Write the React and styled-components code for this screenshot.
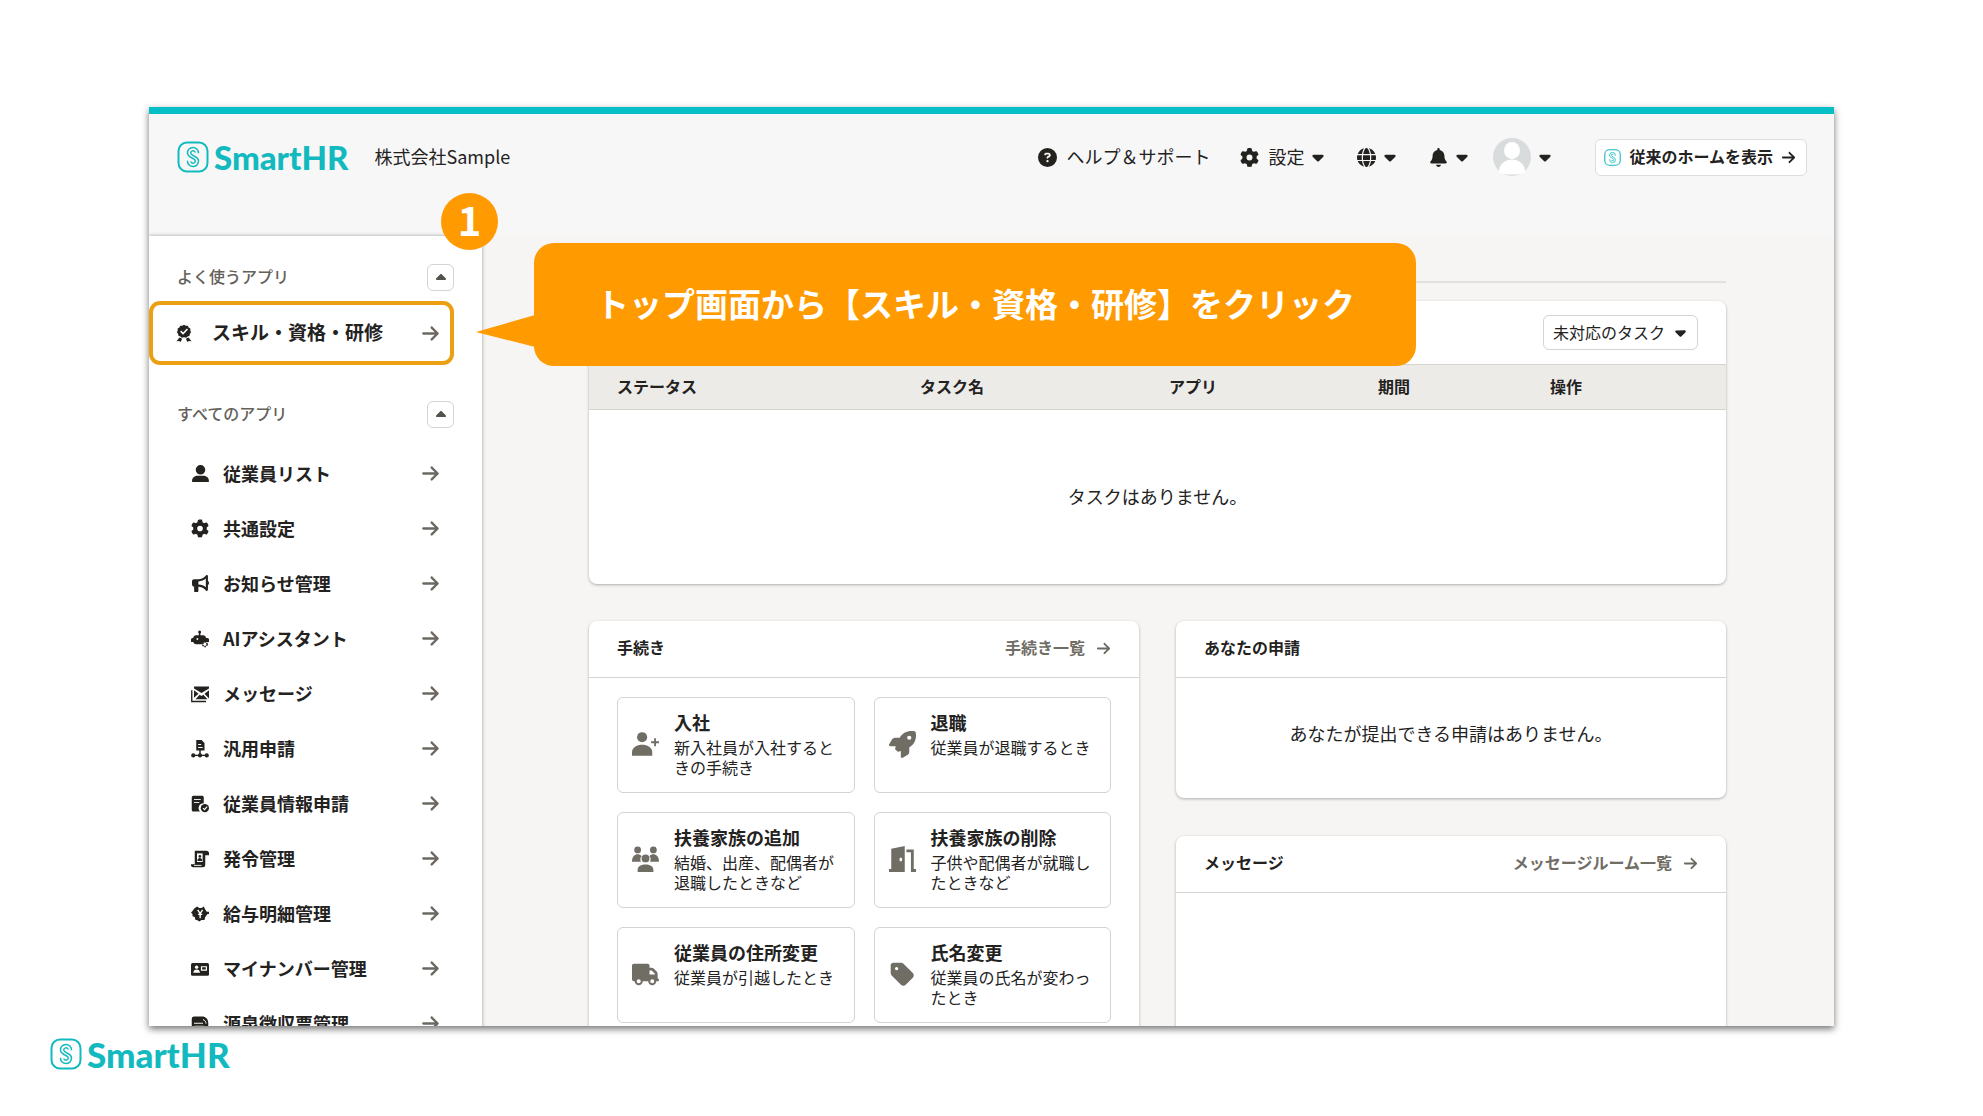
import React from 'react';
import styled, { createGlobalStyle } from 'styled-components';
import {
  FaArrowRight,
  FaBell,
  FaBullhorn,
  FaCaretDown,
  FaCaretUp,
  FaCircleQuestion,
  FaGear,
  FaGlobe,
  FaRocket,
  FaTag,
  FaTruck,
  FaUserLarge,
} from 'react-icons/fa6';

const GlobalStyle = createGlobalStyle`
  * {
    box-sizing: border-box;
  }

  body {
    margin: 0;
    background: #fff;
    color: #23221e;
    font-family: "Noto Sans CJK JP", "Noto Sans", sans-serif;
    font-size: 16px;
    line-height: 20px;
  }

  button,
  select {
    font: inherit;
    color: inherit;
  }

  a {
    color: inherit;
    text-decoration: none;
  }
`;

const Slide = styled.div`
  display: flex;
  flex-direction: column;
  height: 100vh;
  padding: 107px 149px 0;
`;

const Stage = styled.div`
  position: relative;
  flex: 1;
  min-height: 0;
`;

const Screen = styled.div`
  height: 100%;
  overflow: hidden;
  border-top: 7px solid #06bec6;
  background: #f6f5f4;
  box-shadow: 0 3px 7px rgba(0, 0, 0, 0.55);
`;

const SlideFooter = styled.footer`
  display: flex;
  align-items: flex-start;
  height: 90px;
  margin-left: -99px;
  padding-top: 12px;
`;

const Brand = styled.a`
  display: flex;
  align-items: center;
  gap: 5px;
  color: #12b9bf;
  font-family: Lato, "Noto Sans", sans-serif;
  font-size: ${({ $size }) => $size}px;
  font-weight: 900;
  line-height: 32px;
`;

const Header = styled.header`
  display: flex;
  align-items: center;
  gap: 26px;
  padding: 24px 27px 60px 28px;
  background: #f8f7f8;
  font-size: 18px;
`;

const Nav = styled.nav`
  display: flex;
  align-items: center;
  gap: 30px;
  margin-left: auto;
`;

const NavButton = styled.button`
  display: flex;
  align-items: center;
  gap: 5px;
  padding: 0;
  border: 0;
  background: none;
`;

const NavLabel = styled.span`
  margin-left: 4px;
  padding-bottom: 2px;
`;

const AccountButton = styled(NavButton)`
  margin-left: -8px;
`;

const Avatar = styled.svg`
  width: 38px;
  height: 38px;
`;

const HomeLink = styled.a`
  display: flex;
  align-items: center;
  gap: 8px;
  height: 37px;
  margin-left: 11px;
  padding: 0 10px 0 8px;
  border: 1px solid #dfdddb;
  border-radius: 6px;
  background: #fff;
  font-size: 16px;
  font-weight: 700;
`;

const Company = styled.span`
  padding-bottom: 2px;
`;

const Layout = styled.div`
  display: flex;
`;

const Sidebar = styled.aside`
  flex: none;
  width: 333px;
  background: #fff;
  box-shadow: 0 0 4px rgba(0, 0, 0, 0.35);
`;

const SectionHeader = styled.div`
  display: flex;
  align-items: center;
  justify-content: space-between;
  padding: 28px 28px 10px;
`;

const SectionTitle = styled.h2`
  margin: 0;
  padding-bottom: 3px;
  color: #64615b;
  font-size: 16px;
  font-weight: 500;
`;

const ToggleButton = styled.button`
  display: flex;
  align-items: center;
  justify-content: center;
  width: 27px;
  height: 27px;
  padding: 0;
  border: 1px solid #d6d3d0;
  border-radius: 6px;
  background: #fff;
  color: #54524d;
`;

const FeaturedLink = styled.a`
  display: flex;
  align-items: center;
  width: 305px;
  height: 64px;
  margin-bottom: 8px;
  padding: 0 10px 0 22px;
  border: 4px solid #eb9f12;
  border-radius: 11px;
  font-size: 19px;
  font-weight: 700;
`;

const FeaturedLabel = styled.span`
  flex: 1;
  margin-left: 19px;
  padding-bottom: 3px;
`;

const AppList = styled.ul`
  margin: 8px 0 0;
  padding: 0;
  list-style: none;
`;

const AppLink = styled.a`
  display: flex;
  align-items: center;
  height: 55px;
  padding: 0 42px;
  font-size: 18px;
  font-weight: 700;
`;

const AppIcon = styled.span`
  display: flex;
  flex: none;
  justify-content: center;
  width: 18px;
`;

const AppLabel = styled.span`
  flex: 1;
  margin-left: 14px;
  padding-bottom: 1px;
`;

const Arrow = styled(FaArrowRight)`
  flex: none;
  color: ${({ $dark }) => ($dark ? '#23221e' : '#6c6963')};
`;

const Main = styled.main`
  flex: 1;
  min-width: 0;
  padding: 45px 108px 0 107px;
`;

const Divider = styled.hr`
  height: 2px;
  margin: 0 0 18px;
  border: 0;
  background: #e3e1df;
`;

const Card = styled.section`
  overflow: hidden;
  border-radius: 8px;
  background: #fff;
  box-shadow: 0 1px 3px rgba(0, 0, 0, 0.3);
`;

const CardHeader = styled.div`
  display: flex;
  align-items: center;
  justify-content: ${({ $end }) => ($end ? 'flex-end' : 'space-between')};
  height: ${({ $end }) => ($end ? 63 : 57)}px;
  padding: 0 28px;
  border-bottom: ${({ $end }) => ($end ? 0 : '1px solid #d6d3d0')};
`;

const CardTitle = styled.h2`
  margin: 0;
  padding-bottom: 3px;
  font-size: 16px;
  font-weight: 700;
`;

const CardLink = styled.a`
  display: flex;
  align-items: center;
  gap: 11px;
  color: #706d65;
  font-weight: 700;
`;

const CardLinkLabel = styled.span`
  padding-bottom: 3px;
`;

const SelectBox = styled.label`
  position: relative;
  display: block;
`;

const Select = styled.select`
  height: 35px;
  width: 155px;
  padding: 0 9px 2px;
  border: 1px solid #d6d3d0;
  border-radius: 6px;
  background: #fff;
  appearance: none;
`;

const SelectCaret = styled(FaCaretDown)`
  position: absolute;
  top: 9px;
  right: 9px;
  pointer-events: none;
`;

const TaskTable = styled.table`
  width: 100%;
  border-collapse: collapse;
  table-layout: fixed;
`;

const HeadCell = styled.th`
  width: ${({ $width }) => ($width ? `${$width}px` : 'auto')};
  height: 45px;
  padding: 0 28px 2px;
  border-top: 1px solid #d6d3d0;
  border-bottom: 1px solid #d6d3d0;
  background: #edebe8;
  font-weight: 700;
  text-align: left;
`;

const EmptyCell = styled.td`
  height: 174px;
  padding: 0 0 2px;
  font-size: 18px;
  text-align: center;
`;

const Columns = styled.div`
  display: grid;
  grid-template-columns: 1fr 1fr;
  gap: 37px;
  align-items: start;
  margin-top: 37px;
`;

const Stack = styled.div`
  display: grid;
  gap: 38px;
`;

const Tiles = styled.div`
  display: grid;
  grid-template-columns: 1fr 1fr;
  gap: 19px;
  padding: 19px 28px;
`;

const Tile = styled.a`
  display: flex;
  align-items: center;
  gap: 15px;
  height: 96px;
  padding: 0 14px;
  border: 1px solid #d6d3d0;
  border-radius: 6px;
`;

const TileIcon = styled.span`
  display: flex;
  flex: none;
  color: #706d65;
`;

const TileText = styled.span`
  align-self: flex-start;
  padding-top: 12px;
`;

const TileTitle = styled.strong`
  display: block;
  margin-bottom: 3px;
  font-size: 18px;
  line-height: 24px;
`;

const TileNote = styled.span`
  display: block;
  line-height: 20px;
`;

const CardBody = styled.div`
  display: flex;
  align-items: center;
  justify-content: center;
  height: ${({ $height }) => $height}px;
  padding-bottom: 10px;
  font-size: 18px;
`;

const Badge = styled.div`
  position: absolute;
  top: 86px;
  left: 292px;
  width: 57px;
  height: 57px;
  border-radius: 50%;
  background: #ff9a00;
  color: #fff;
  font-size: 40px;
  font-weight: 700;
  line-height: 52px;
  text-align: center;
`;

const Callout = styled.p`
  position: absolute;
  top: 136px;
  left: 385px;
  width: 882px;
  height: 123px;
  margin: 0;
  padding-left: 62px;
  border-radius: 20px;
  background: #ff9a00;
  color: #fff;
  font-size: 33px;
  font-weight: 700;
  line-height: 121px;
  white-space: nowrap;

  &::before {
    content: '';
    position: absolute;
    top: 72px;
    left: -58px;
    width: 59px;
    height: 32px;
    background: #ff9a00;
    clip-path: polygon(0 53%, 100% 0, 100% 100%);
  }
`;

const LogoMark = ({ size = 32, weight = 2 }) => (
  <svg width={size} height={size} viewBox="0 0 32 32" fill="none" stroke="currentColor" strokeWidth={weight}>
    <rect x="1.5" y="1.5" width="29" height="29" rx="8.5" />
    <g strokeWidth="1.5" strokeLinecap="round">
      <path d="M21.500 11.800a5.500 5.500 0 0 0-11 .2c0 5 7.800 4.800 7.800 8a2.300 2.300 0 0 1-4.300 1" />
      <path d="M10.500 20.200a5.500 5.500 0 0 0 11-.2c0-5-7.800-4.800-7.800-8a2.300 2.300 0 0 1 4.300-1" />
    </g>
  </svg>
);

const Glyph = ({ size = 18, children }) => (
  <svg width={size} height={size} viewBox="0 0 24 24" fill="currentColor">
    {children}
  </svg>
);

const AwardIcon = () => (
  <Glyph>
    <path d="M12 1l2.300 1.200 2.600.1 1.300 2.300 2.200 1.400v2.600l1 2.400-1.500 2.100-.5 2.600-2.500.8-2 1.700-2.900-.6-2.900.6-2-1.700-2.500-.8-.5-2.600L2.600 11l1-2.400V6l2.200-1.400 1.300-2.300 2.600-.1z" />
    <path d="M6 18l-4 5 3.500-.3L7.500 24l2-4.500zM18 18l4 5-3.500-.3-2 1.300-2-4.500z" />
    <path d="M7.500 9.500l3.300 3.300 5.800-6" fill="none" stroke="#fff" strokeWidth="2" />
  </Glyph>
);

const RobotIcon = () => (
  <Glyph>
    <circle cx="11.500" cy="2.500" r="2" />
    <path d="M10.500 3h2v4H16a4 4 0 0 1 4 3.500h2a2 2 0 0 1 2 2V16h-4a4.500 4.500 0 0 0-5 3H7a4 4 0 0 1-4-3H0v-3.500a2 2 0 0 1 2-2h1A4 4 0 0 1 7 7h3.500z" />
    <circle cx="18.500" cy="19" r="3" fill="none" stroke="currentColor" strokeWidth="2" strokeDasharray="2 1" />
    <circle cx="8.500" cy="12" r="1.200" fill="#fff" />
  </Glyph>
);

const MailsIcon = () => (
  <Glyph>
    <path d="M4 2h20v2.500l-10 6-10-6zM4 7l6 4.500L4 17zM24 7v11l-6-6.500zM11.500 13l2.500 1.500 2.500-1.500L22 19H6z" />
    <path d="M1 7v15h19" fill="none" stroke="currentColor" strokeWidth="1.800" />
  </Glyph>
);

const WorkflowIcon = () => (
  <Glyph>
    <path d="M7 0h7l4 4v10H7zM11 14h2v5h-2z" />
    <path d="M9.500 6h4M9.500 10h6" stroke="#fff" strokeWidth="1.500" />
    <path d="M3 20.500h18" stroke="currentColor" strokeWidth="1.800" />
    <circle cx="3" cy="20.500" r="2.800" />
    <circle cx="12" cy="20.500" r="2.800" />
    <circle cx="21" cy="20.500" r="2.800" />
  </Glyph>
);

const DocCheckIcon = () => (
  <Glyph>
    <path d="M3 1h12a2 2 0 0 1 2 2v8a6.500 6.500 0 0 0-5 11H3a2 2 0 0 1-2-2V3a2 2 0 0 1 2-2z" />
    <path d="M4 6h9M4 10h7" stroke="#fff" strokeWidth="1.200" />
    <circle cx="18.500" cy="17.500" r="5.500" />
    <path d="M16 17.500l2 2 3.500-4" fill="none" stroke="#fff" strokeWidth="1.500" />
  </Glyph>
);

const ScrollIcon = () => (
  <Glyph>
    <path d="M5 1h15a3.500 3.500 0 0 1 4 4v2h-5v13a3 3 0 0 1-3 3H3a3 3 0 0 1-3-4h5z" />
    <path d="M8 4.500h7.500V16H8z" fill="#fff" />
    <path d="M4 20.500h10" stroke="#fff" strokeWidth="1.200" />
    <circle cx="11.800" cy="8.500" r="1.800" />
    <path d="M8.500 14.500c0-5 6.500-5 6.500 0z" />
  </Glyph>
);

const PayIcon = () => (
  <Glyph>
    <path d="M8 2l3 2h3l3-2 2 4 2 3h3v3h-2l-3 4-1 4h-4l-3 2-3-2H6l-1-4-3-1v-3l-2-2 2-2 2-3z" />
    <path d="M9 6.500l3.200 5 3.200-5M12.200 11v6.500M9.500 12.500h5.500" fill="none" stroke="#fff" strokeWidth="1.800" />
  </Glyph>
);

const IdCardIcon = () => (
  <Glyph>
    <rect y="4" width="24" height="17" rx="2" />
    <circle cx="7.500" cy="9.500" r="2.300" fill="#fff" />
    <path d="M3 17c0-6 9-6 9 0z" fill="#fff" />
    <path d="M14 9h6.500v4.500H14z" fill="none" stroke="#fff" strokeWidth="1.600" />
  </Glyph>
);

const SlipIcon = () => (
  <Glyph>
    <path d="M4 2h11c5 0 8 4 8 9v11H1V5a3 3 0 0 1 3-3z" />
    <path d="M16 6c2.500 1 4 3 4 5.500M4 11h12M5 15h12M5 19h13" fill="none" stroke="#fff" strokeWidth="1.300" />
  </Glyph>
);

const UserPlusIcon = () => (
  <Glyph size={27}>
    <circle cx="9" cy="5.500" r="4.500" />
    <path d="M0 22v-3c0-9 18-9 18 0v3z" />
    <path d="M20.500 6.500v7M17 10h7" stroke="currentColor" strokeWidth="1.600" />
  </Glyph>
);

const FamilyIcon = () => (
  <Glyph size={27}>
    <circle cx="5" cy="3.500" r="3" />
    <circle cx="19" cy="3.500" r="3" />
    <path d="M0 14c0-7 6-8 8.500-5-1.500 1.500-1.300 3.500-.5 5zM24 14c0-7-6-8-8.500-5 1.500 1.500 1.300 3.500.5 5z" />
    <circle cx="12" cy="11" r="3.500" />
    <path d="M5 23v-2c0-6 14-6 14 0v2z" />
  </Glyph>
);

const DoorIcon = () => (
  <Glyph size={27}>
    <path d="M2 2.500L14 0v23H0v-2.500h2zM15.500 3H22v17.500h2V23h-4.500V5.500h-4z" />
    <ellipse cx="10.500" cy="12" rx="1.200" ry="1.700" fill="#fff" />
  </Glyph>
);

const apps = [
  { label: '従業員リスト', icon: <FaUserLarge size={17} /> },
  { label: '共通設定', icon: <FaGear size={19} /> },
  { label: 'お知らせ管理', icon: <FaBullhorn size={17} /> },
  { label: 'AIアシスタント', icon: <RobotIcon /> },
  { label: 'メッセージ', icon: <MailsIcon /> },
  { label: '汎用申請', icon: <WorkflowIcon /> },
  { label: '従業員情報申請', icon: <DocCheckIcon /> },
  { label: '発令管理', icon: <ScrollIcon /> },
  { label: '給与明細管理', icon: <PayIcon /> },
  { label: 'マイナンバー管理', icon: <IdCardIcon /> },
  { label: '源泉徴収票管理', icon: <SlipIcon /> },
];

const procedures = [
  { title: '入社', note: '新入社員が入社するときの手続き', icon: <UserPlusIcon /> },
  { title: '退職', note: '従業員が退職するとき', icon: <FaRocket size={27} /> },
  { title: '扶養家族の追加', note: '結婚、出産、配偶者が退職したときなど', icon: <FamilyIcon /> },
  { title: '扶養家族の削除', note: '子供や配偶者が就職したときなど', icon: <DoorIcon /> },
  { title: '従業員の住所変更', note: '従業員が引越したとき', icon: <FaTruck size={27} /> },
  { title: '氏名変更', note: '従業員の氏名が変わったとき', icon: <FaTag size={27} /> },
];

const columns = [
  { label: 'ステータス', width: 303 },
  { label: 'タスク名', width: 249 },
  { label: 'アプリ', width: 209 },
  { label: '期間', width: 172 },
  { label: '操作' },
];

const Section = ({ title, children }) => (
  <>
    <SectionHeader>
      <SectionTitle>{title}</SectionTitle>
      <ToggleButton type="button" aria-label={title}>
        <FaCaretUp size={16} />
      </ToggleButton>
    </SectionHeader>
    {children}
  </>
);

const ScreenHeader = () => (
  <Header>
    <Brand href="#" $size={33}>
      <LogoMark />
      SmartHR
    </Brand>
    <Company>株式会社Sample</Company>
    <Nav>
      <NavButton type="button">
        <FaCircleQuestion size={19} />
        <NavLabel>ヘルプ＆サポート</NavLabel>
      </NavButton>
      <NavButton type="button">
        <FaGear size={19} />
        <NavLabel>設定</NavLabel>
        <FaCaretDown />
      </NavButton>
      <NavButton type="button" aria-label="言語"><FaGlobe size={19} /><FaCaretDown /></NavButton>
      <NavButton type="button" aria-label="通知"><FaBell size={19} /><FaCaretDown /></NavButton>
      <AccountButton type="button" aria-label="アカウント">
        <Avatar viewBox="0 0 38 38">
          <circle cx="19" cy="19" r="19" fill="#d9dcdc" />
          <ellipse cx="19" cy="12.500" rx="8" ry="8.500" fill="#fff" />
          <path d="M6 35c-1-18 27-18 26 0q-13 3-26 0z" fill="#fff" />
        </Avatar>
        <FaCaretDown />
      </AccountButton>
      <HomeLink href="#">
        <Brand as="span" $size={16}><LogoMark size={17} /></Brand>
        <Company>従来のホームを表示</Company>
        <Arrow $dark size={15} />
      </HomeLink>
    </Nav>
  </Header>
);

const AppSidebar = () => (
  <Sidebar>
    <Section title="よく使うアプリ">
      <FeaturedLink href="#">
        <AwardIcon />
        <FeaturedLabel>スキル・資格・研修</FeaturedLabel>
        <Arrow size={19} />
      </FeaturedLink>
    </Section>
    <Section title="すべてのアプリ">
      <AppList>
        {apps.map(({ label, icon }) => (
          <li key={label}>
            <AppLink href="#">
              <AppIcon>{icon}</AppIcon>
              <AppLabel>{label}</AppLabel>
              <Arrow size={19} />
            </AppLink>
          </li>
        ))}
      </AppList>
    </Section>
  </Sidebar>
);

const TaskCard = () => (
  <Card>
    <CardHeader $end>
      <SelectBox>
        <Select aria-label="タスクの絞り込み">
          <option>未対応のタスク</option>
        </Select>
        <SelectCaret size={17} />
      </SelectBox>
    </CardHeader>
    <TaskTable>
      <thead>
        <tr>
          {columns.map(({ label, width }) => (
            <HeadCell key={label} $width={width}>{label}</HeadCell>
          ))}
        </tr>
      </thead>
      <tbody>
        <tr>
          <EmptyCell colSpan={5}>タスクはありません。</EmptyCell>
        </tr>
      </tbody>
    </TaskTable>
  </Card>
);

const App = () => (
  <>
    <GlobalStyle />
    <Slide>
      <Stage>
        <Screen>
          <ScreenHeader />
          <Layout>
            <AppSidebar />
            <Main>
              <Divider />
              <TaskCard />
              <Columns>
                <Card>
                  <CardHeader>
                    <CardTitle>手続き</CardTitle>
                    <CardLink href="#">
                      <CardLinkLabel>手続き一覧</CardLinkLabel>
                      <Arrow size={15} />
                    </CardLink>
                  </CardHeader>
                  <Tiles>
                    {procedures.map(({ title, note, icon }) => (
                      <Tile href="#" key={title}>
                        <TileIcon>{icon}</TileIcon>
                        <TileText>
                          <TileTitle>{title}</TileTitle>
                          <TileNote>{note}</TileNote>
                        </TileText>
                      </Tile>
                    ))}
                  </Tiles>
                </Card>
                <Stack>
                  <Card>
                    <CardHeader>
                      <CardTitle>あなたの申請</CardTitle>
                    </CardHeader>
                    <CardBody $height={120}>あなたが提出できる申請はありません。</CardBody>
                  </Card>
                  <Card>
                    <CardHeader>
                      <CardTitle>メッセージ</CardTitle>
                      <CardLink href="#">
                        <CardLinkLabel>メッセージルーム一覧</CardLinkLabel>
                        <Arrow size={15} />
                      </CardLink>
                    </CardHeader>
                    <CardBody $height={220} />
                  </Card>
                </Stack>
              </Columns>
            </Main>
          </Layout>
        </Screen>
        <Badge>1</Badge>
        <Callout>トップ画面から【スキル・資格・研修】をクリック</Callout>
      </Stage>
      <SlideFooter>
        <Brand href="#" $size={35}>
          <LogoMark />
          SmartHR
        </Brand>
      </SlideFooter>
    </Slide>
  </>
);

export default App;
